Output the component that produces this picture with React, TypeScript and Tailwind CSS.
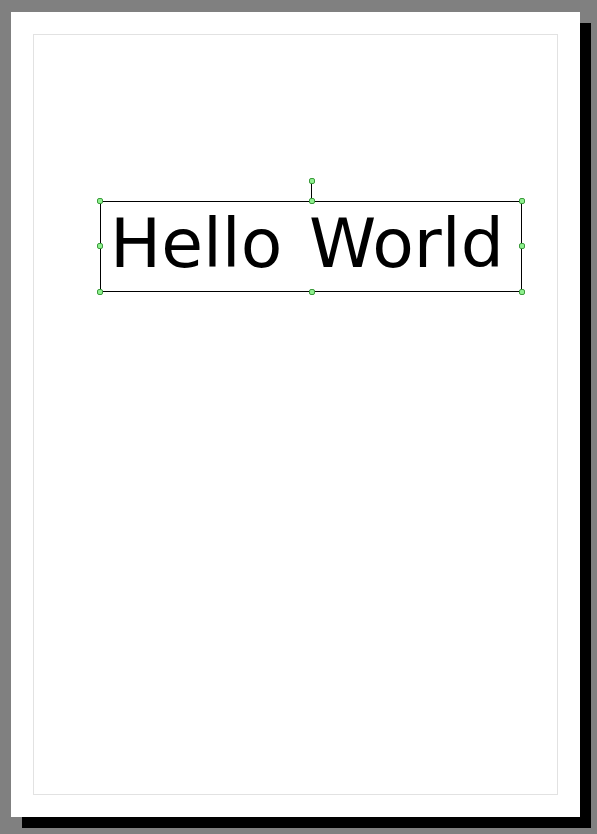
import React from 'react';

const Handle: React.FC<{ className: string }> = ({ className }) => (
  <div
    className={`absolute w-[6px] h-[6px] rounded-[2px] bg-[#8ef08e] border border-[#3c9a3c] ${className}`}
  />
);

const App: React.FC = () => {
  return (
    <div className="w-full h-[834px] bg-[#808080] pl-[11px] pt-[12px]">
      {/* page */}
      <div className="relative w-[569px] h-[805px] bg-white shadow-[11px_11px_0_#000] flex">
        <div className="flex-1 m-[22px] border border-[#e2e2e2]" />

        {/* selected text object */}
        <div className="absolute left-[89px] top-[189px] w-[422px] h-[91px] border border-black">
          <div
            className="pl-[9px] pt-[8px] text-[68px] leading-[68px] text-black whitespace-nowrap [word-spacing:5px]"
            style={{ fontFamily: '"DejaVu Sans", sans-serif' }}
          >
            Hello World
          </div>

          {/* rotate handle */}
          <div className="absolute left-[210px] -top-[19px] w-px h-[19px] bg-black" />
          <Handle className="left-[208px] -top-[24px]" />

          <Handle className="-left-[4px] -top-[4px]" />
          <Handle className="left-[208px] -top-[4px]" />
          <Handle className="-right-[4px] -top-[4px]" />
          <Handle className="-left-[4px] top-[41px]" />
          <Handle className="-right-[4px] top-[41px]" />
          <Handle className="-left-[4px] -bottom-[4px]" />
          <Handle className="left-[208px] -bottom-[4px]" />
          <Handle className="-right-[4px] -bottom-[4px]" />
        </div>
      </div>
    </div>
  );
};

export default App;
